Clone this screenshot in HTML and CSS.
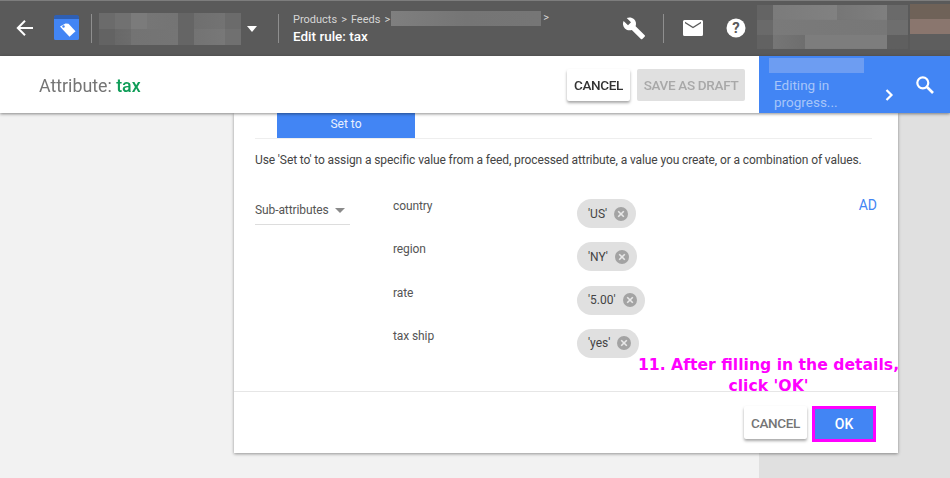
FILE: index.html
```html
<!DOCTYPE html>
<html lang="en">
<head>
<meta charset="utf-8">
<title>Edit rule: tax</title>
<link rel="stylesheet" href="styles.css">
</head>
<body>
<div class="app">
  <header class="topbar">
    <button class="icon-btn back" aria-label="Back">
      <svg width="20" height="20" viewBox="0 0 20 20"><path d="M18 10H3.500M10 2.800 2.800 10l7.200 7.200" fill="none" stroke="#fff" stroke-width="2"/></svg>
    </button>
    <svg class="logo" width="25" height="25" viewBox="0 0 25 25">
      <path d="M0 3a2 2 0 0 1 2-2h21a2 2 0 0 1 2 2v20.500a1.500 1.500 0 0 1-1.500 1.500h-22A1.500 1.500 0 0 1 0 23.500z" fill="#4285f4"/>
      <path d="M0 2a2 2 0 0 1 2-2h21a2 2 0 0 1 2 2v2H0z" fill="#2f5fb3"/>
      <path d="M6 11.500 11.500 8.500l3 .3 7 7.500-6 5.500-7-7.500z" fill="#fff"/>
      <circle cx="9.500" cy="11.500" r="1.200" fill="#4285f4"/>
    </svg>
    <span class="divider first"></span>
    <div class="mosaic account"></div>
    <span class="caret"></span>
    <span class="divider second"></span>
    <div class="crumbs">
      <div class="crumb-line">
        <span>Products</span><span class="sep">&gt;</span><span>Feeds</span><span class="sep">&gt;</span>
        <span class="mosaic crumb-blur"></span><span class="sep">&gt;</span>
      </div>
      <div class="page-title">Edit rule: tax</div>
    </div>
    <div class="top-actions">
      <svg class="wrench" width="24" height="24" viewBox="0 0 24 24"><path fill="#fff" d="M22.700 19.300 13.600 10.200c.9-2.300.4-5-1.500-6.900C10.100 1.300 7.100.9 4.700 2l4.300 4.300-3 3L1.600 5C.4 7.400.9 10.400 2.900 12.400c1.900 1.900 4.600 2.400 6.900 1.500l9.100 9.100c.4.400 1 .4 1.400 0l2.300-2.300c.5-.4.500-1.100.1-1.400z"/></svg>
      <span class="divider third"></span>
      <svg class="mail" width="20" height="16" viewBox="0 0 20 16"><path fill="#fff" d="M1.500 0h17A1.500 1.500 0 0 1 20 1.500v13a1.500 1.500 0 0 1-1.500 1.500h-17A1.500 1.500 0 0 1 0 14.500v-13A1.500 1.500 0 0 1 1.500 0zM2 3.200l8 5 8-5V1.800l-8 5-8-5z" fill-rule="evenodd"/></svg>
      <svg class="help" width="20" height="20" viewBox="0 0 20 20"><circle cx="10" cy="10" r="9.500" fill="#fff"/><text x="10" y="15" text-anchor="middle" class="help-mark">?</text></svg>
    </div>
    <div class="mosaic user"></div>
    <div class="mosaic avatar"></div>
  </header>

  <section class="subbar">
    <h1 class="attr">Attribute: <span class="attr-name">tax</span></h1>
    <div class="sub-actions">
      <button class="btn raised">CANCEL</button>
      <button class="btn disabled">SAVE AS DRAFT</button>
    </div>
    <aside class="status">
      <div class="status-text">
        <div class="mosaic status-blur"></div>
        <div class="status-label">Editing in progress...</div>
      </div>
      <svg class="chev" width="10" height="12" viewBox="0 0 10 12"><path d="M2.500 1 7.500 6l-5 5" fill="none" stroke="#fff" stroke-width="2.200"/></svg>
      <svg class="search" width="20" height="20" viewBox="0 0 20 20"><circle cx="7.800" cy="7.800" r="5.500" fill="none" stroke="#fff" stroke-width="2.200"/><path d="m12 12 6 6" stroke="#fff" stroke-width="2.600"/></svg>
    </aside>
  </section>

  <main class="stage">
    <div class="card">
      <div class="tabs"><div class="tab">Set to</div></div>
      <p class="hint">Use 'Set to' to assign a specific value from a feed, processed attribute, a value you create, or a combination of values.</p>
      <div class="form">
        <div class="select">Sub-attributes<span class="select-caret"></span></div>
        <div class="rows">
          <div class="row"><span class="row-label">country</span><span class="chip">'US'<svg class="x" viewBox="0 0 14 14"><circle cx="7" cy="7" r="7"/><path d="m4.200 4.200 5.600 5.600m0-5.600-5.600 5.600"/></svg></span></div>
          <div class="row"><span class="row-label">region</span><span class="chip">'NY'<svg class="x" viewBox="0 0 14 14"><circle cx="7" cy="7" r="7"/><path d="m4.200 4.200 5.600 5.600m0-5.600-5.600 5.600"/></svg></span></div>
          <div class="row"><span class="row-label">rate</span><span class="chip">'5.00'<svg class="x" viewBox="0 0 14 14"><circle cx="7" cy="7" r="7"/><path d="m4.200 4.200 5.600 5.600m0-5.600-5.600 5.600"/></svg></span></div>
          <div class="row"><span class="row-label">tax ship</span><span class="chip">'yes'<svg class="x" viewBox="0 0 14 14"><circle cx="7" cy="7" r="7"/><path d="m4.200 4.200 5.600 5.600m0-5.600-5.600 5.600"/></svg></span></div>
        </div>
        <a class="add">AD</a>
      </div>
      <footer class="card-foot">
        <button class="btn raised muted">CANCEL</button>
        <button class="btn primary">OK</button>
      </footer>
    </div>
  </main>
  <div class="note">11. After filling in the details,<br>click 'OK'</div>
</div>
</body>
</html>
```

FILE: styles.css
```css
* { box-sizing: border-box; }
html, body { margin: 0; height: 100%; }
body { font-family: Roboto, "Liberation Sans", sans-serif; color: #444; overflow: hidden; }
button { font-family: inherit; border: 0; padding: 0; background: none; }

.app { position: relative; width: 950px; height: 478px; background: linear-gradient(90deg, #f2f2f2 759px, #e0e0e0 759px); display: flex; flex-direction: column; filter: blur(0.35px); }

/* top bar */
.topbar { height: 56px; flex: none; background: #5a5a5a; border-top: 1px solid #7d7d7d; display: flex; align-items: center; position: relative; z-index: 2; }
.icon-btn { display: flex; }
.back { margin: -1px 0 0 15px; }
.logo { margin-left: 19px; margin-top: -2px; }
.divider { width: 1px; height: 29px; background: #8f8f8f; flex: none; }
.divider.first { margin-left: 12px; }
.mosaic { filter: blur(0.6px); }
.account { width: 142px; height: 32px; margin-left: 7px; background-repeat: no-repeat; background-size: 100% 50%; background-position: 0 0, 0 100%;
  background-image:
    linear-gradient(90deg, #6b6b6b 16px, #717171 16px, #717171 32px, #7b7b7b 32px, #7b7b7b 48px, #767676 48px, #747474 79px, #656565 79px, #656565 95px, #6f6f6f 95px, #737373 126px, #6b6b6b 126px),
    linear-gradient(90deg, #636363 16px, #686868 16px, #6c6c6c 32px, #737373 32px, #757575 79px, #656565 79px, #656565 95px, #737373 95px, #787878 126px, #707070 126px); }
.caret { width: 0; height: 0; border: 5.500px solid transparent; border-top: 6px solid #fff; border-bottom: 0; margin-left: 6px; }
.divider.second { margin-left: 21px; }
.crumbs { margin-left: 14px; width: 328px; flex: none; }
.crumb-line { display: flex; align-items: center; font-size: 11px; height: 14px; color: #d6d6d6; margin-top: -1px; }
.sep { margin: 0 4px; }
.crumb-blur { width: 150px; height: 15px; margin: -1px 0 0 -3px; background: linear-gradient(90deg, #7f7f7f, #757575 50%, #767676); }
.crumb-line .sep:last-child { margin-left: 2px; margin-top: -3px; }
.page-title { font-size: 13.500px; font-weight: 500; color: #fff; margin-top: 3px; line-height: 15px; white-space: nowrap; }
.top-actions { display: flex; align-items: center; margin: -1px 0 0 1px; }
.wrench { flex: none; margin-top: -1px; }
.divider.third { margin-left: 17px; }
.mail { margin-left: 19px; }
.help { margin-left: 23px; }
.help-mark { font: 700 15px Roboto, sans-serif; fill: #5a5a5a; }
.user { width: 151px; height: 44px; margin-left: 11px; margin-top: -3px; background-repeat: no-repeat; background-size: 100% 34%, 100% 34%, 100% 34%; background-position: 0 0, 0 50%, 0 100%;
  background-image:
    linear-gradient(90deg, #646464 16px, #7b7b7b 16px, #818181 80px, #767676 80px, #7f7f7f 130px, #6a6a6a 130px),
    linear-gradient(90deg, #6a6a6a 16px, #7a7a7a 16px, #777 130px, #6e6e6e 130px),
    linear-gradient(90deg, #626262 16px, #767676 16px, #6e6e6e 48px, #7d7d7d 48px, #7d7d7d 130px, #5f5f5f 130px); }
.avatar { width: 40px; height: 46px; margin-left: 2px; margin-top: -3px; background: linear-gradient(180deg, #6f6258 33%, #8a766e 33%, #8a766e 66%, #5e5e5e 66%); }

/* sub bar */
.subbar { height: 57px; flex: none; background: #fff; display: flex; align-items: center; box-shadow: 0 1px 3px rgba(0,0,0,.45); position: relative; z-index: 2; }
.attr { margin: 1px 0 0 39px; font-size: 17.800px; font-weight: 400; color: #757575; flex: 1; }
.attr-name { color: #0f9d58; font-weight: 500; }
.sub-actions { display: flex; gap: 7px; margin-right: 14px; }
.btn { height: 32px; font-size: 13.500px; font-weight: 500; letter-spacing: -.32px; border-radius: 2px; display: flex; align-items: center; justify-content: center; }
.raised { width: 63px; background: #fff; color: #333; box-shadow: 0 2px 3px rgba(0,0,0,.35); }
.disabled { width: 108px; background: #e0e0e0; color: #a8a8a8; }
.status { width: 191px; height: 57px; background: #4285f4; display: flex; flex: none; position: relative; }
.status-text { width: 115px; margin-left: 15px; }
.status-blur { width: 95px; height: 15px; margin: 2px 0 0 -5px; background: #6d9df2; }
.status-label { font-size: 13.500px; line-height: 17px; color: #a7c5f9; margin-top: 4px; }
.chev { margin-top: 33px; margin-left: -5px; }
.search { margin-left: 21px; margin-top: 19px; }

/* card */
.stage { flex: 1; display: flex; }
.card { width: 664px; height: 340px; margin-left: 234px; background: #fff; box-shadow: 0 1px 3px rgba(0,0,0,.4); display: flex; flex-direction: column; }
.tabs { margin: 0 26px 0 21px; height: 26px; flex: none; border-bottom: 1px solid #eee; }
.tab { width: 138px; height: 25px; margin-left: 22px; padding-bottom: 4px; background: #4285f4; color: #e8f0fe; font-size: 12px; display: flex; align-items: center; justify-content: center; }
.hint { margin: 13px 0 0 21px; font-size: 12px; letter-spacing: -.11px; line-height: 16px; color: #444; white-space: nowrap; }
.form { display: flex; flex: 1; margin-top: 23px; position: relative; }
.select { width: 95px; height: 33px; margin: 1px 0 0 21px; font-size: 12px; letter-spacing: -.1px; color: #555; border-bottom: 1px solid #ddd; display: flex; align-items: center; padding-top: 4px; flex: none; }
.select-caret { width: 0; height: 0; border: 5px solid transparent; border-top: 5px solid #8a8a8a; border-bottom: 0; margin-left: 6px; }
.rows { margin-left: 43px; display: flex; flex-direction: column; gap: 14.300px; margin-top: 8px; }
.row { display: flex; height: 29px; }
.row-label { width: 184px; font-size: 12px; letter-spacing: -.1px; color: #555; line-height: 16px; margin-top: -1px; }
.chip { display: flex; align-items: center; gap: 7px; height: 29px; padding: 0 8px 0 11px; background: #e0e0e0; border-radius: 15px; font-size: 12px; color: #444; }
.x { width: 14px; height: 14px; flex: none; }
.x circle { fill: #a3a3a3; }
.x path { stroke: #e8e8e8; stroke-width: 1.600; fill: none; }
.add { position: absolute; right: 21px; top: 6px; font-size: 14px; color: #4285f4; line-height: 16px; }
.card-foot { height: 62px; flex: none; border-top: 1px solid #e6e6e6; display: flex; justify-content: flex-end; align-items: flex-start; gap: 5px; padding: 14px 22px 0 0; }
.card-foot .btn { height: 33px; }
.muted { color: #757575; }
.primary { width: 64px; height: 36px !important; background: #4285f4; color: #fff; font-size: 14px; letter-spacing: 0; outline: 3px solid #ff00ff; outline-offset: -3px; border-radius: 0; }

.note { position: absolute; left: 620px; top: 354px; width: 297px; text-align: center; font-family: "DejaVu Sans", sans-serif; font-weight: 700; font-size: 15.650px; line-height: 21px; color: #ff00ff; z-index: 3; }
```
